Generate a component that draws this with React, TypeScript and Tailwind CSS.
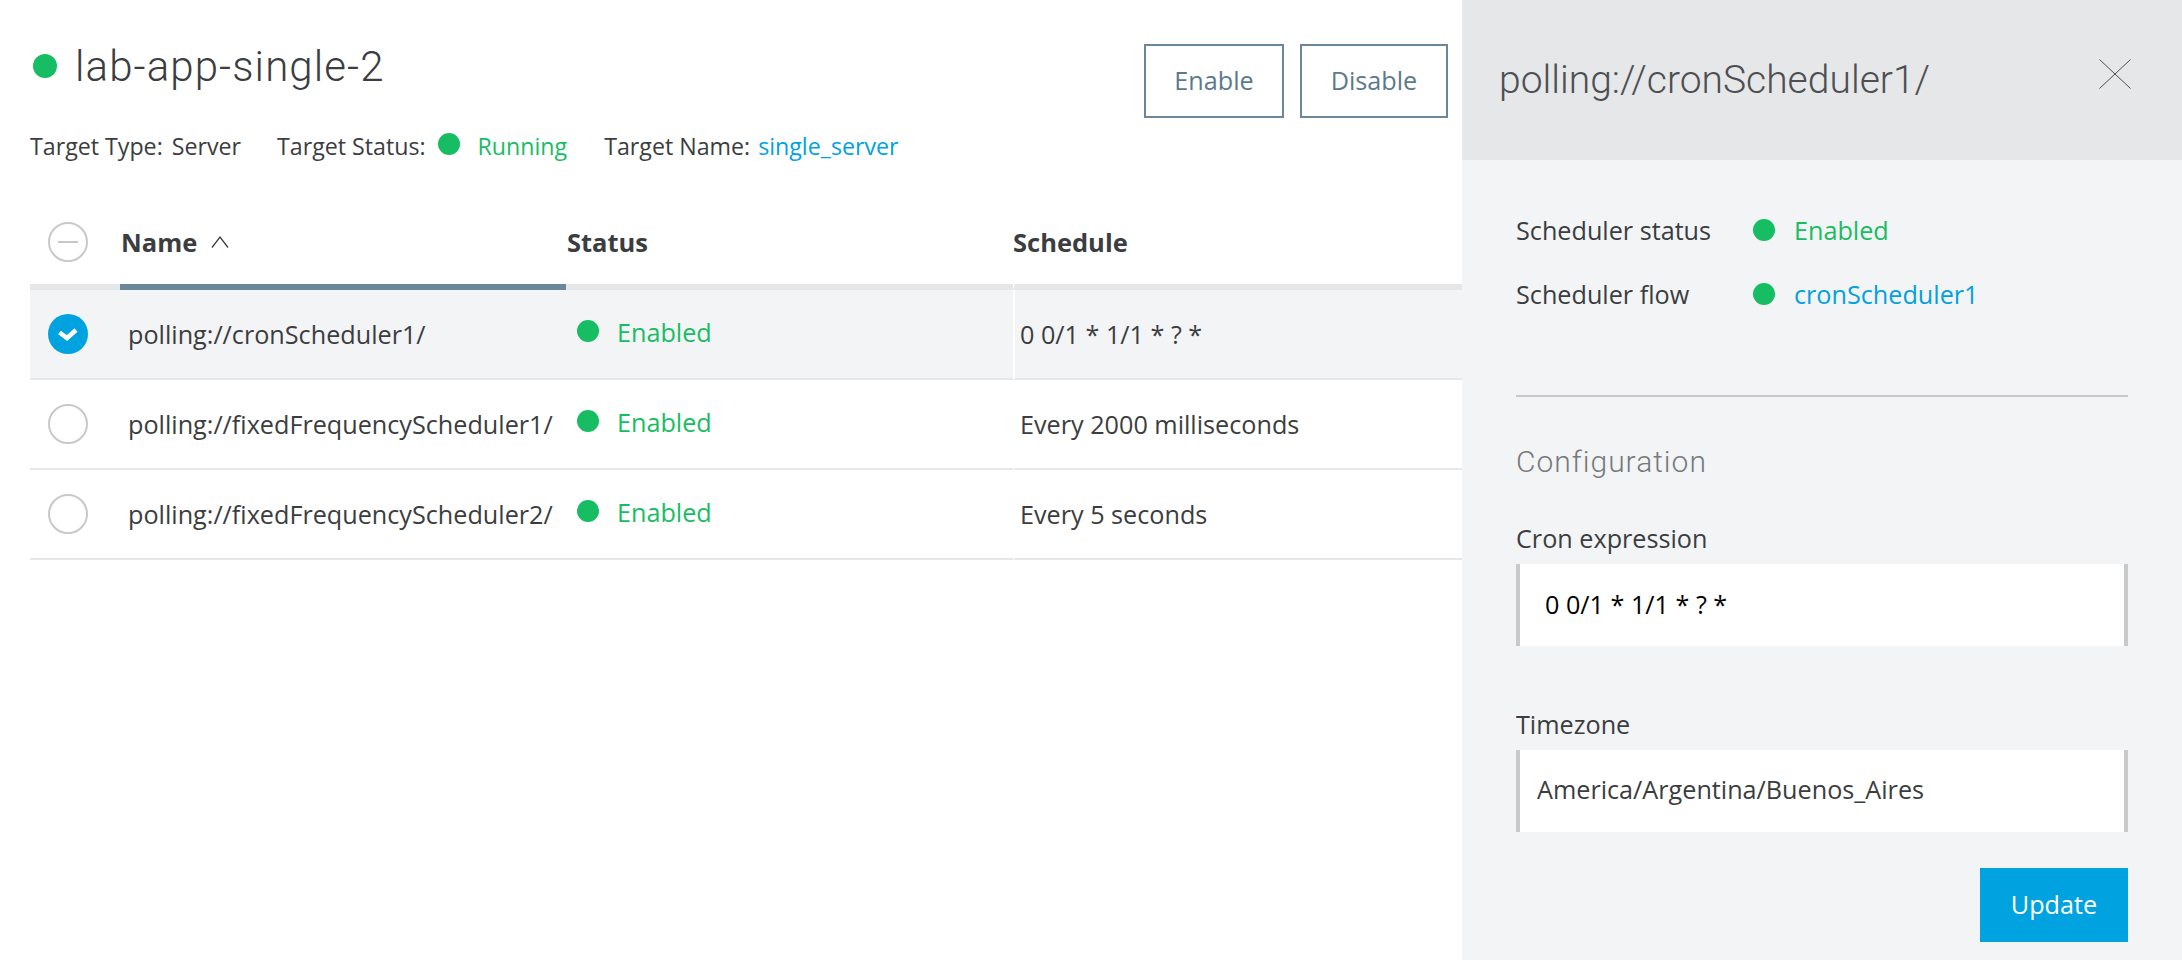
const GREEN = 'text-[#17bd63]';
const rows = [
    { name: 'polling://cronScheduler1/', schedule: '0 0/1 * 1/1 * ? *', selected: true },
    { name: 'polling://fixedFrequencyScheduler1/', schedule: 'Every 2000 milliseconds', selected: false },
    { name: 'polling://fixedFrequencyScheduler2/', schedule: 'Every 5 seconds', selected: false },
];

function Dot({ className = '' }: { className?: string }) {
    return <span className={`block w-[22px] h-[22px] rounded-full bg-[#17bd63] shrink-0 ${className}`} />;
}

function Circle({ selected, indeterminate }: { selected?: boolean; indeterminate?: boolean }) {
    if (selected) {
        return (
            <span className="flex items-center justify-center w-10 h-10 rounded-full bg-[#00a2df]">
                <svg width="20" height="14" viewBox="0 0 20 14" fill="none" stroke="white" strokeWidth="4.5">
                    <path d="M1.5 5.5 L9 11 L18 3" />
                </svg>
            </span>
        );
    }
    return (
        <span className="flex items-center justify-center w-10 h-10 rounded-full border-2 border-[#c8c9cb] bg-white">
            {indeterminate && <span className="block w-5 h-[2px] bg-[#c8c9cb]" />}
        </span>
    );
}

function Table() {
    return (
        <div className="ml-[30px]">
            <div className="grid grid-cols-[90px_446px_447px_1fr] h-[90px] text-[25.5px] font-bold">
                <div className="flex items-center pl-[18px] border-b-[6px] border-[#e6e7e9]">
                    <Circle indeterminate />
                </div>
                <div className="flex items-center pl-[1px] border-b-[6px] border-[#6a8899]">
                    Name
                    <svg width="18" height="12" viewBox="0 0 18 12" fill="none" stroke="#3b3d40" strokeWidth="1.25" className="ml-[14px]">
                        <path d="M1 11.5 L9 1 L17 11.5" />
                    </svg>
                </div>
                <div className="flex items-center pl-[1px] border-b-[6px] border-[#e6e7e9]">Status</div>
                <div className="flex items-center border-l-2 border-b-[6px] border-l-white border-b-[#e6e7e9]">
                    <span className="-ml-[2px]">Schedule</span>
                </div>
            </div>
            {rows.map((row) => (
                <div
                    key={row.name}
                    className={`grid grid-cols-[90px_446px_447px_1fr] h-[90px] ${row.selected ? 'bg-[#f3f4f6]' : ''}`}
                >
                    <div className="flex items-center pl-[18px] border-b-2 border-[#e6e7e9]">
                        <Circle selected={row.selected} />
                    </div>
                    <div className="flex items-center pl-[8px] pt-[2px] border-b-2 border-[#e6e7e9] whitespace-nowrap">{row.name}</div>
                    <div className="flex items-center pl-[11px] pb-[6px] gap-[18px] border-b-2 border-[#e6e7e9]">
                        <Dot />
                        <span className={`pt-[3px] ${GREEN}`}>Enabled</span>
                    </div>
                    <div className="flex items-center pl-[5px] pt-[2px] border-l-2 border-b-2 border-l-white border-b-[#e6e7e9]">{row.schedule}</div>
                </div>
            ))}
        </div>
    );
}

function Field({ label, value, className }: { label: string; value: string; className: string }) {
    return (
        <div>
            <div className="h-[42px] leading-[32px]">{label}</div>
            <input
                readOnly
                value={value}
                className={`block w-full h-[82px] bg-white border-x-[4px] border-[#c8c9cb] outline-none ${className}`}
            />
        </div>
    );
}

export default function App() {
    return (
        <div className="flex h-[960px] overflow-hidden bg-white text-[25.2px] text-[#3b3d40] font-['Open_Sans',sans-serif]">
            <main className="flex-1 min-w-0">
                <div className="flex justify-between h-[200px] pl-[30px] pr-[14px]">
                    <div>
                        <div className="flex items-center gap-[18px] ml-[3px] mt-[41px] h-[50px]">
                            <Dot className="w-[24px] h-[24px]" />
                            <h1 className="font-['Roboto',sans-serif] font-light text-[42px] tracking-[1.1px]">lab-app-single-2</h1>
                        </div>
                        <div className="flex items-center h-[34px] mt-[38px] text-[23.2px] whitespace-nowrap">
                            <span>Target Type:</span>
                            <span className="ml-[9px]">Server</span>
                            <span className="ml-[36px]">Target Status:</span>
                            <Dot className="ml-[12px] mb-[4px]" />
                            <span className={`ml-[18px] ${GREEN}`}>Running</span>
                            <span className="ml-[37px]">Target Name:</span>
                            <span className="ml-[8px] text-[#00a2df]">single_server</span>
                        </div>
                    </div>
                    <div className="flex gap-4 mt-[44px] h-[74px] text-[#5b7a8c]">
                        <button className="w-[140px] border-2 border-[#6a8899]">Enable</button>
                        <button className="w-[148px] border-2 border-[#6a8899]">Disable</button>
                    </div>
                </div>
                <Table />
            </main>

            <aside className="w-[720px] bg-[#f3f4f6] shrink-0">
                <div className="flex items-center justify-between h-[160px] bg-[#e6e7e9] pl-[37px] pr-[51px]">
                    <h2 className="font-['Roboto',sans-serif] font-light text-[39px] text-[#4d4f52]">polling://cronScheduler1/</h2>
                    <svg width="32" height="30" viewBox="0 0 32 30" fill="none" stroke="#4d4f52" strokeWidth="1" className="mb-[12px]">
                        <path d="M0.5 0.5 L31.5 29.5 M31.5 0.5 L0.5 29.5" />
                    </svg>
                </div>
                <div className="px-[54px]">
                    <div className="flex flex-col gap-[30px] mt-[54px]">
                        <div className="flex items-center h-[34px]">
                            <span className="w-[237px]">Scheduler status</span>
                            <Dot className="mb-[3px]" />
                            <span className={`ml-[19px] ${GREEN}`}>Enabled</span>
                        </div>
                        <div className="flex items-center h-[34px]">
                            <span className="w-[237px]">Scheduler flow</span>
                            <Dot className="mb-[3px]" />
                            <span className="ml-[19px] text-[#00a2df]">cronScheduler1</span>
                        </div>
                    </div>
                    <div className="h-[2px] mt-[83px] bg-[#c8c9cb]" />
                    <h3 className="mt-[42px] h-[46px] leading-[46px] font-['Roboto',sans-serif] font-light text-[30px] tracking-[1px] text-[#77797c]">Configuration</h3>
                    <div className="flex flex-col gap-[62px] mt-[37px]">
                        <Field label="Cron expression" value="0 0/1 * 1/1 * ? *" className="pl-[25px] pb-[2px] text-black" />
                        <Field label="Timezone" value="America/Argentina/Buenos_Aires" className="pl-[17px] pb-[4px]" />
                    </div>
                    <div className="flex justify-end mt-[36px]">
                        <button className="w-[148px] h-[74px] bg-[#00a2df] text-white">Update</button>
                    </div>
                </div>
            </aside>
        </div>
    );
}
